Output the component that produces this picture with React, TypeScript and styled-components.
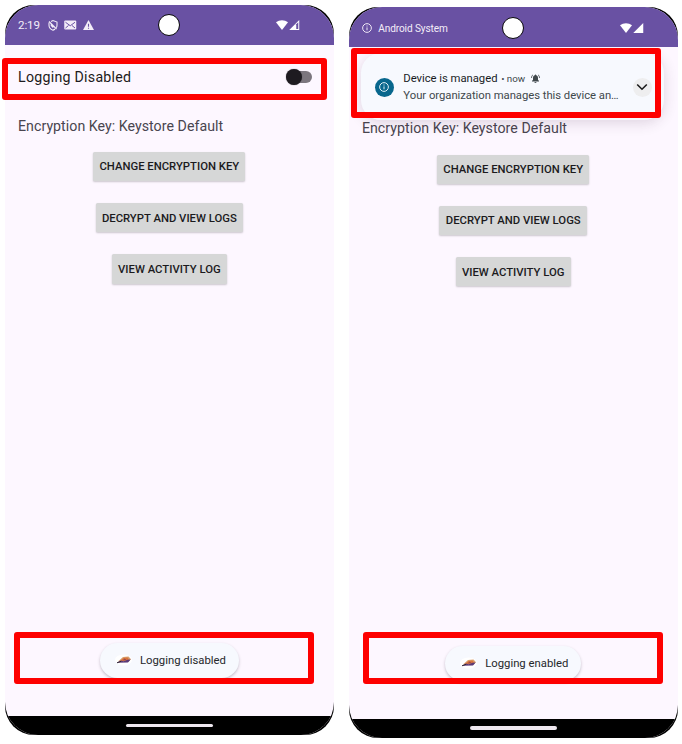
import React from "react";
import styled, { createGlobalStyle } from "styled-components";

const Global = createGlobalStyle`
  * { box-sizing: border-box; }
  body { margin: 0; background: #fff; font-family: Roboto, sans-serif; }
`;

const Page = styled.main`
  position: relative;
  width: 682px;
  height: 744px;
  padding-left: 5px;
  display: flex;
  align-items: flex-start;
  gap: 15.2px;
  overflow: hidden;
  white-space: nowrap;
`;

const Phone = styled.section<{ $top: number }>`
  width: 328.7px;
  height: 730.4px;
  margin-top: ${(p) => p.$top}px;
  flex: none;
  background: #000;
  border-radius: 29px;
  overflow: hidden;
`;

const Screen = styled.div`
  position: relative;
  display: flex;
  flex-direction: column;
  height: 100%;
  border-radius: 33px;
  overflow: hidden;
  background: #fdf7ff;
`;

const StatusBar = styled.header`
  position: relative;
  height: 40px;
  flex: none;
  display: flex;
  align-items: center;
  justify-content: space-between;
  padding: 1px 34px 0 13px;
  color: #f3edf8;
  background: #6951a3;
`;

const StatusGroup = styled.div`
  display: flex;
  align-items: center;
`;

const Clock = styled.span`
  width: 30.4px;
  font-size: 11.6px;
  letter-spacing: -0.1px;
`;

const SystemName = styled.span`
  margin-left: 6.4px;
  padding-top: 1px;
  font-size: 10.1px;
  letter-spacing: -0.12px;
`;

const Camera = styled.div`
  position: absolute;
  left: 153.3px;
  top: 9.3px;
  width: 22px;
  height: 22px;
  border-radius: 50%;
  background: #fff;
  border: 1.3px solid #08070b;
`;

const Body = styled.div`
  flex: 1;
  display: flex;
  flex-direction: column;
`;

const SettingRow = styled.div`
  height: 65px;
  display: flex;
  align-items: center;
  justify-content: space-between;
  padding: 0 21.5px 0 13px;
`;

const SettingLabel = styled.span`
  font-size: 14.2px;
  letter-spacing: 0.26px;
  color: #1d1b20;
`;

const Switch = styled.div`
  width: 26px;
  height: 16px;
  display: flex;
  align-items: center;
`;

const Thumb = styled.div`
  position: relative;
  z-index: 1;
  flex: none;
  width: 16px;
  height: 16px;
  border-radius: 50%;
  background: #1e1b20;
  box-shadow: 0 0 1px #4d4a50;
`;

const Track = styled.div`
  flex: none;
  width: 18px;
  height: 11.5px;
  margin-left: -8px;
  border-radius: 6px;
  background: #7c767e;
`;

const KeyLabel = styled.div`
  height: 32px;
  line-height: 32px;
  padding-left: 13px;
  font-size: 14.2px;
  letter-spacing: 0.03px;
  color: #49454f;
`;

const Actions = styled.div`
  display: flex;
  flex-direction: column;
  align-items: center;
  gap: 21.8px;
  padding-top: 10.3px;
`;

const ActionButton = styled.button<{ $width: number }>`
  width: ${(p) => p.$width}px;
  height: 29.4px;
  padding: 0.8px 0 0;
  border: 0;
  border-radius: 1.5px;
  background: #d6d7d7;
  color: #1b1a1d;
  font: 500 11.3px Roboto, sans-serif;
  box-shadow: 0 1px 2px rgba(0, 0, 0, 0.2);
`;

const NavBar = styled.footer`
  height: 19px;
  flex: none;
  display: flex;
  justify-content: center;
  padding-top: 7.6px;
  background: #000;
`;

const HomePill = styled.div`
  width: 87px;
  height: 3.2px;
  border-radius: 2px;
  background: #eee7ef;
`;

const Toast = styled.div<{ $left: number; $width: number }>`
  position: absolute;
  left: ${(p) => p.$left}px;
  bottom: 57px;
  width: ${(p) => p.$width}px;
  height: 35px;
  display: flex;
  align-items: center;
  gap: 8.5px;
  padding-left: 14.5px;
  border-radius: 18px;
  background: #f7f9fe;
  color: #25272b;
  font-size: 11.3px;
  box-shadow: 0 1.5px 3px rgba(40, 30, 50, 0.26);
`;

const Notification = styled.article`
  position: absolute;
  left: 12.5px;
  top: 46px;
  width: 303px;
  height: 67px;
  display: flex;
  align-items: center;
  padding: 1px 12.5px 0 13.3px;
  border-radius: 20px;
  background: #f7f9fe;
  box-shadow: 0 3px 14px rgba(60, 30, 60, 0.16);
`;

const InfoBadge = styled.div`
  width: 19px;
  height: 19px;
  flex: none;
  display: grid;
  place-items: center;
  border-radius: 50%;
  background: #08678d;
  color: #eaf6fb;
`;

const NoticeText = styled.div`
  flex: 1;
  margin-left: 9.7px;
  color: #40484c;
  font-size: 11.3px;
  line-height: 17.3px;
  letter-spacing: -0.04px;
`;

const NoticeTitle = styled.div`
  display: flex;
  align-items: center;
  font-size: 11.3px;
  color: #171c1f;
`;

const NoticeTime = styled.span`
  margin: 0 5.6px 0 3.7px;
  font-size: 9.8px;
  color: #40484c;
`;

const Expand = styled.div`
  width: 19px;
  height: 19px;
  flex: none;
  display: grid;
  place-items: center;
  border-radius: 50%;
  background: #eeeeef;
`;

const Highlight = styled.div<{ $x: number; $y: number; $w: number; $h: number }>`
  position: absolute;
  left: ${(p) => p.$x}px;
  top: ${(p) => p.$y}px;
  width: ${(p) => p.$w}px;
  height: ${(p) => p.$h}px;
  border: 6.5px solid #fe0000;
  border-radius: 3px;
`;

const Glyph = styled.svg<{ $gap?: number }>`
  display: block;
  flex: none;
  margin-left: ${(p) => p.$gap ?? 0}px;
`;

const InfoIcon = ({ size }: { size: number }) => (
  <Glyph width={size} height={size} viewBox="0 0 24 24" fill="none" stroke="currentColor" strokeWidth="2.3">
    <circle cx="12" cy="12" r="10.5" />
    <path d="M12 10.5v7M12 6v2.4" />
  </Glyph>
);

const ShieldIcon = () => (
  <Glyph width="10" height="11" viewBox="0 0 20 22" fill="none" stroke="currentColor" strokeWidth="2.2">
    <path d="M6 3l4-1.8 8 3v6.2c0 2-.6 3.7-1.5 5.2M14 18c-1.1 1-2.5 1.8-4 2.4-4.8-1.8-8-5.4-8-10V5" />
    <path d="M2 3l15 15M6.5 8v3l4 4" />
  </Glyph>
);

const MailIcon = () => (
  <Glyph $gap={6} width="12.5" height="10" viewBox="0 0 25 20">
    <rect x="0.5" y="1" width="24" height="18" rx="2" fill="currentColor" />
    <path d="M3 4.5l9.5 7 9.5-7M3 16l6-5M22 16l-6-5" fill="none" stroke="#6951a3" strokeWidth="2" />
  </Glyph>
);

const WarningIcon = () => (
  <Glyph $gap={6} width="11" height="10" viewBox="0 0 22 20">
    <path d="M11 0l11 20H0z" fill="currentColor" />
    <path d="M11 7.5v6M11 15.3v2.3" stroke="#6951a3" strokeWidth="2.2" />
  </Glyph>
);

const WifiIcon = () => (
  <Glyph width="12" height="10" viewBox="0 0 24 20">
    <path d="M0 4.6C7-1.2 17-1.2 24 4.6L12 20z" fill="#fff" />
  </Glyph>
);

const SignalIcon = ({ partial }: { partial?: boolean }) => (
  <Glyph $gap={1} width="10.5" height="10" viewBox="0 0 20 20">
    <path d="M20 0v20H0z" fill="#fff" />
    {partial && <path d="M14 8.5l4-4V18h-4z" fill="#6951a3" />}
  </Glyph>
);

const BellIcon = () => (
  <Glyph width="9" height="9" viewBox="0 0 18 18" fill="#40484c">
    <path d="M9 1c1 0 1.5.7 1.5 1.6C13 3.3 14 5.5 14 8v4l2 1.7V15H2v-1.3L4 12V8c0-2.5 1-4.7 3.5-5.4C7.5 1.7 8 1 9 1zM7 16h4c0 1-.8 1.800-2 1.800S7 17 7 16z" />
    <path d="M1 8c0-3 1-5 3-6.5M17 8c0-3-1-5-3-6.5" fill="none" stroke="#40484c" strokeWidth="1.6" />
  </Glyph>
);

const ChevronIcon = () => (
  <Glyph width="12" height="8" viewBox="0 0 12 8" fill="none" stroke="#1c1c1d" strokeWidth="1.6">
    <path d="M1.2 1.5L6 6.2l4.8-4.7" />
  </Glyph>
);

const AppLogo = () => (
  <Glyph width="17" height="12" viewBox="0 0 17 12">
    <ellipse cx="8.5" cy="6" rx="8.5" ry="5.6" fill="#fff" />
    <path d="M3 7.5L8 3l5.500-.6 2.500 2.800-2.800 2.600z" fill="#d9a06e" />
    <path d="M5 7l3.500-3 4-.5 1.500 2-2 1.300z" fill="#d9743c" />
    <path d="M2 8.800l4-2.300 2.500.8 4-1.600 3.200-.2-2.700 3z" fill="#5b3a78" />
    <path d="M7.500 6.800l2-2.300 2 1.200z" fill="#9a4a4e" />
    <path d="M2 8.800l4-1.500" stroke="#302535" strokeWidth="1" />
  </Glyph>
);

const buttons = [
  { label: "CHANGE ENCRYPTION KEY", width: 152.3 },
  { label: "DECRYPT AND VIEW LOGS", width: 147.6 },
  { label: "VIEW ACTIVITY LOG", width: 115.3 },
];

const Controls = () => (
  <>
    <KeyLabel>Encryption Key: Keystore Default</KeyLabel>
    <Actions>
      {buttons.map((b) => (
        <ActionButton key={b.label} $width={b.width}>{b.label}</ActionButton>
      ))}
    </Actions>
  </>
);

export default function App() {
  return (
    <>
      <Global />
      <Page>
        <Phone $top={4.6}>
          <Screen>
            <StatusBar>
              <StatusGroup>
                <Clock>2:19</Clock>
                <ShieldIcon />
                <MailIcon />
                <WarningIcon />
              </StatusGroup>
              <Camera />
              <StatusGroup>
                <WifiIcon />
                <SignalIcon partial />
              </StatusGroup>
            </StatusBar>
            <Body>
              <SettingRow>
                <SettingLabel>Logging Disabled</SettingLabel>
                <Switch>
                  <Thumb />
                  <Track />
                </Switch>
              </SettingRow>
              <Controls />
            </Body>
            <NavBar><HomePill /></NavBar>
            <Toast $left={95} $width={138.5}>
              <AppLogo />
              <span>Logging disabled</span>
            </Toast>
          </Screen>
        </Phone>
        <Phone $top={7.4}>
          <Screen>
            <StatusBar>
              <StatusGroup>
                <InfoIcon size={10} />
                <SystemName>Android System</SystemName>
              </StatusGroup>
              <Camera />
              <StatusGroup>
                <WifiIcon />
                <SignalIcon />
              </StatusGroup>
            </StatusBar>
            <Body>
              <SettingRow />
              <Controls />
            </Body>
            <NavBar><HomePill /></NavBar>
            <Notification>
              <InfoBadge><InfoIcon size={10} /></InfoBadge>
              <NoticeText>
                <NoticeTitle>
                  Device is managed <NoticeTime>• now</NoticeTime>
                  <BellIcon />
                </NoticeTitle>
                Your organization manages this device an…
              </NoticeText>
              <Expand><ChevronIcon /></Expand>
            </Notification>
            <Toast $left={96.3} $width={136}>
              <AppLogo />
              <span>Logging enabled</span>
            </Toast>
          </Screen>
        </Phone>
        <Highlight $x={2} $y={57.5} $w={325} $h={42.5} />
        <Highlight $x={351} $y={48} $w={310} $h={70} />
        <Highlight $x={14.3} $y={632} $w={300} $h={51.5} />
        <Highlight $x={363.3} $y={632} $w={300} $h={51.5} />
      </Page>
    </>
  );
}
